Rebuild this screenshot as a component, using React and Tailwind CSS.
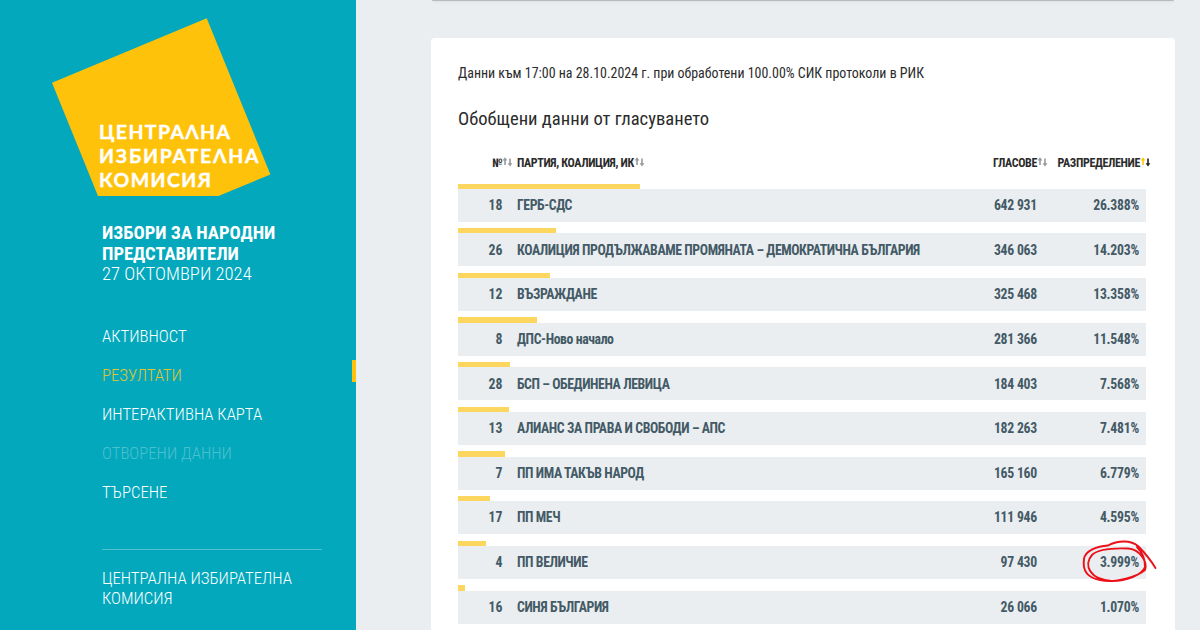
import React from "react";

const resultados = [
  { n: 18, name: "ГЕРБ-СДС", votes: "642 931", pct: 26.388 },
  {
    n: 26,
    name: "КОАЛИЦИЯ ПРОДЪЛЖАВАМЕ ПРОМЯНАТА – ДЕМОКРАТИЧНА БЪЛГАРИЯ",
    votes: "346 063",
    pct: 14.203,
  },
  { n: 12, name: "ВЪЗРАЖДАНЕ", votes: "325 468", pct: 13.358 },
  { n: 8, name: "ДПС-Ново начало", votes: "281 366", pct: 11.548 },
  { n: 28, name: "БСП – ОБЕДИНЕНА ЛЕВИЦА", votes: "184 403", pct: 7.568 },
  { n: 13, name: "АЛИАНС ЗА ПРАВА И СВОБОДИ – АПС", votes: "182 263", pct: 7.481 },
  { n: 7, name: "ПП ИМА ТАКЪВ НАРОД", votes: "165 160", pct: 6.779 },
  { n: 17, name: "ПП МЕЧ", votes: "111 946", pct: 4.595 },
  { n: 4, name: "ПП ВЕЛИЧИЕ", votes: "97 430", pct: 3.999, marked: true },
  { n: 16, name: "СИНЯ БЪЛГАРИЯ", votes: "26 066", pct: 1.07 },
];

const menu = [
  { label: "АКТИВНОСТ" },
  { label: "РЕЗУЛТАТИ", active: true },
  { label: "ИНТЕРАКТИВНА КАРТА" },
  { label: "ОТВОРЕНИ ДАННИ", disabled: true },
  { label: "ТЪРСЕНЕ" },
];

const Logo = () => (
  <svg
    width="219"
    height="179"
    viewBox="52 18 219 179"
    className="ml-[52px] mt-[18px] block font-['Lato',sans-serif]"
  >
    <path d="M52 82.8 206.7 18.2 270.4 174.4 218.4 196H98Z" fill="#ffc20a" />
    <g fill="#fff" stroke="#fff" strokeWidth="0.4" fontSize="19.5" fontWeight="700">
      <text x="99" y="138.7" textLength="131">ЦЕНТРАΛНА</text>
      <text x="99" y="162.7" textLength="159.5">ИЗБИРАТЕΛНА</text>
      <text x="99" y="186.7" textLength="112">КОМИСИЯ</text>
    </g>
  </svg>
);

const SortIcon = ({ active }) => (
  <svg width="11" height="10" viewBox="0 0 11 10" className="mt-[2px] shrink-0">
    <path d="M3 .2 5.4 3.6H3.8V8H2.2V3.6H.6Z" fill={active ? "#ffc20a" : "#999"} />
    <path d="M8 9.6 5.6 6.2H7.2V1.4H8.8V6.2H10.4Z" fill={active ? "#222" : "#999"} />
  </svg>
);

const Sidebar = () => (
  <aside className="w-[356px] h-full shrink-0 bg-[#03a8bc] text-white">
    <Logo />
    <div className="ml-[102px] mt-[26px] text-[18.6px] leading-[20.5px]">
      <p className="font-bold">ИЗБОРИ ЗА НАРОДНИ</p>
      <p className="font-bold">ПРЕДСТАВИТЕЛИ</p>
      <p className="font-light">27 ОКТОМВРИ 2024</p>
    </div>
    <nav className="ml-[102px] mt-[32.5px] text-[16.75px] font-light">
      {menu.map((item) => (
        <div key={item.label} className="flex h-[39px] items-center justify-between">
          <a
            className={
              item.active ? "text-[#e0c530]" : item.disabled ? "text-white/30" : "text-white"
            }
          >
            {item.label}
          </a>
          {item.active && <span className="mt-[4px] h-[22px] w-1 self-start bg-[#ffc20a]" />}
        </div>
      ))}
    </nav>
    <div className="ml-[102px] mt-[36.5px] w-[220px] border-t border-white/30 pt-[18px] text-[16.75px] font-light leading-[20.5px]">
      ЦЕНТРАЛНА ИЗБИРАТЕЛНА КОМИСИЯ
    </div>
  </aside>
);

const Row = ({ row }) => (
  <div className="h-[44.65px]">
    <div className="h-[5.3px] bg-[#fdd660]" style={{ width: `${row.pct}%` }} />
    <div className="flex h-[33px] items-center bg-[#eaeef1] pr-[7px]">
      <span className="w-[44.5px] text-right">{row.n}</span>
      <span className="ml-[14.5px] flex-1 whitespace-nowrap tracking-[-0.41px]">{row.name}</span>
      <span className="w-[80px] text-right tracking-[-0.25px]">{row.votes}</span>
      <span className="relative w-[102px] text-right tracking-[-0.25px]">
        {row.pct.toFixed(3)}%
        {row.marked && (
          <svg
            width="80"
            height="50"
            viewBox="1080 538 80 50"
            fill="none"
            stroke="#ec1019"
            strokeWidth="1.9"
            strokeLinecap="round"
            className="absolute -right-[21px] -top-[15px]"
          >
            <path d="M1155.500 569C1150 560 1145 554 1138 547C1131 541 1118 541 1108 546.500C1097 547 1085 552 1084 560C1082 573 1089 579 1100 581C1116 585 1138 577 1145 571C1148 562 1139 550 1128 549.500C1114 549 1098 550 1092 556C1083 566 1090 581 1112 582C1126 582 1142 576 1145 568C1145 559 1141 552 1137 548" />
          </svg>
        )}
      </span>
    </div>
  </div>
);

export default function App() {
  return (
    <div className="flex h-[630px] w-[1200px] overflow-hidden bg-[#eaeef1] font-['Roboto_Condensed','Roboto',sans-serif] [font-stretch:75%]">
      <Sidebar />
      <main className="ml-[75px] w-[744px]">
        <div className="mx-px h-px rounded-b bg-[#b5babd] shadow-sm" />
        <section className="mt-[37px] h-[620px] rounded-[4px] bg-white pl-[27px] pr-[29px] pt-[24.5px] text-[#2b2b2b]">
          <p className="text-[13.95px] leading-[20px]">
            Данни към 17:00 на 28.10.2024 г. при обработени 100.00% СИК протоколи в РИК
          </p>
          <h2 className="mt-[23.5px] text-[18.6px] leading-[26px]">Обобщени данни от гласуването</h2>
          <div className="mt-[22.5px] flex h-4 items-center text-[12px] font-bold leading-4 tracking-[-0.36px]">
            <span className="flex w-[59px] justify-end pr-[4px]">№<SortIcon /></span>
            <span className="flex flex-1">ПАРТИЯ, КОАЛИЦИЯ, ИК<SortIcon /></span>
            <span className="flex w-[80px] justify-end">ГЛАСОВЕ<SortIcon /></span>
            <span className="-mr-[5px] flex w-[103px] justify-end">РАЗПРЕДЕЛЕНИЕ<SortIcon active /></span>
          </div>
          <div className="mt-[13px] text-[13.75px] font-bold text-[#445a66]">
            {resultados.map((row) => (
              <Row key={row.n} row={row} />
            ))}
          </div>
        </section>
      </main>
    </div>
  );
}
